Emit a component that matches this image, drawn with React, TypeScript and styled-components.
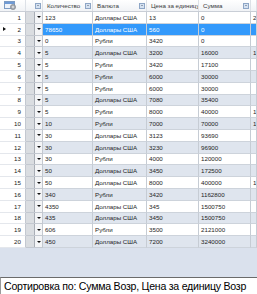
import React from 'react';
import styled, { createGlobalStyle } from 'styled-components';

const GlobalStyle = createGlobalStyle`
  html, body {
    margin: 0;
    padding: 0;
    background: #ffffff;
  }
`;

const COLS = '26px 17px 50px 54px 52px 52px 1fr';

type Row = [string, string, string, string, string];

const rows: Row[] = [
  ['123', 'Доллары США', '13', '0', '2'],
  ['78650', 'Доллары США', '560', '0', ''],
  ['0', 'Рубли', '3420', '0', ''],
  ['5', 'Доллары США', '3200', '16000', '1'],
  ['5', 'Рубли', '3420', '17100', ''],
  ['5', 'Рубли', '6000', '30000', ''],
  ['5', 'Рубли', '6000', '30000', ''],
  ['5', 'Доллары США', '7080', '35400', ''],
  ['5', 'Рубли', '8000', '40000', '1'],
  ['10', 'Рубли', '7000', '70000', '1'],
  ['30', 'Доллары США', '3123', '93690', ''],
  ['30', 'Доллары США', '3230', '96900', ''],
  ['30', 'Рубли', '4000', '120000', ''],
  ['50', 'Доллары США', '3450', '172500', ''],
  ['50', 'Доллары США', '8000', '400000', '1'],
  ['340', 'Рубли', '3420', '1162800', ''],
  ['4350', 'Доллары США', '345', '1500750', ''],
  ['435', 'Доллары США', '3450', '1500750', ''],
  ['606', 'Рубли', '3500', '2121000', ''],
  ['450', 'Доллары США', '7200', '3240000', ''],
];

const Page = styled.div`
  width: 257px;
  height: 294px;
  display: flex;
  flex-direction: column;
  overflow: hidden;
  font-family: 'Liberation Sans', Arial, sans-serif;
  background: #dce3ee;
`;

const Grid = styled.div`
  display: flex;
  flex-direction: column;
  background: #ffffff;
`;

const HeaderRow = styled.div`
  display: grid;
  grid-template-columns: ${COLS};
  height: 12px;
  background: linear-gradient(#ffffff, #f1f3f6);
  border-bottom: 1px solid #c9ced6;
  box-sizing: border-box;
`;

const HeaderCell = styled.div`
  display: flex;
  align-items: center;
  justify-content: space-between;
  padding: 0 1px 0 4px;
  border-right: 1px solid #dde1e7;
  font-size: 6.2px;
  color: #3a3a3a;
  white-space: nowrap;
  overflow: hidden;
  min-width: 0;
`;

const Corner = styled.div`
  display: flex;
  align-items: center;
  padding-left: 4px;
  border-right: 1px solid #dde1e7;
`;

const FilterButton = styled.span`
  flex: none;
  width: 6px;
  height: 6px;
  margin-left: auto;
  box-sizing: border-box;
  border: 1px solid #8ea6c6;
  background: #d6e2f1;
  position: relative;
  &::after {
    content: '';
    position: absolute;
    left: 1px;
    top: 1.5px;
    border-left: 1px solid transparent;
    border-right: 1px solid transparent;
    border-top: 1.5px solid #4a5a70;
  }
`;

const DataRow = styled.div<{ $shaded: boolean }>`
  display: grid;
  grid-template-columns: ${COLS};
  height: 11.8px;
  background: ${(p) => (p.$shaded ? '#dfe5ee' : '#ffffff')};
`;

const RowHeader = styled.div`
  display: flex;
  align-items: center;
  justify-content: space-between;
  padding: 0 4px 0 3px;
  background: #ffffff;
  border-right: 1px solid #c3c8d0;
  border-bottom: 1px solid #e4e7ec;
  box-sizing: border-box;
  font-size: 6.2px;
  color: #222;
`;

const Pointer = styled.span`
  width: 0;
  height: 0;
  border-top: 2px solid transparent;
  border-bottom: 2px solid transparent;
  border-left: 3px solid #111;
`;

const ComboCell = styled.div`
  display: flex;
  border-right: 1px solid #c3c8d0;
  border-bottom: 1px solid #c3c8d0;
  box-sizing: border-box;
  background: #ffffff;
`;

const ComboFace = styled.span`
  width: 8px;
  background: #dadde1;
  border-right: 1px solid #a9aeb6;
`;

const ComboArrow = styled.span`
  flex: 1;
  display: flex;
  align-items: center;
  justify-content: center;
  background: #f4f5f7;
  &::after {
    content: '';
    border-left: 2px solid transparent;
    border-right: 2px solid transparent;
    border-top: 2.5px solid #111;
  }
`;

const Cell = styled.div<{ $selected: boolean }>`
  display: flex;
  align-items: center;
  padding-left: 2px;
  border-right: 1px solid #c6ccd4;
  border-bottom: 1px solid #cdd3db;
  box-sizing: border-box;
  font-size: 6.2px;
  white-space: nowrap;
  overflow: hidden;
  min-width: 0;
  color: ${(p) => (p.$selected ? '#ffffff' : '#1e1e1e')};
  background: ${(p) => (p.$selected ? '#3399fb' : 'transparent')};
`;

const Filler = styled.div`
  flex: 1;
  background: #dae1ed;
`;

const StatusBar = styled.div`
  height: 17px;
  flex: none;
  display: flex;
  align-items: center;
  padding-left: 3px;
  background: #ffffff;
  border-top: 1px solid #6b6b6b;
  border-left: 1px solid #9a9a9a;
  box-sizing: border-box;
  font-size: 10.6px;
  letter-spacing: -0.25px;
  color: #000;
  white-space: nowrap;
`;

const CornerIcon = () => (
  <svg width="13" height="9" viewBox="0 0 13 9">
    <rect x="0.5" y="0.5" width="10" height="7" fill="#eef3fa" stroke="#7d9cc4" />
    <rect x="1" y="1" width="9" height="2" fill="#6f9bd6" />
    <circle cx="9" cy="6" r="2.6" fill="#a8adb4" stroke="#7a7f86" strokeWidth="0.6" />
    <circle cx="9" cy="6" r="0.9" fill="#e6e8eb" />
  </svg>
);

const headers = ['', 'Количество', 'Валюта', 'Цена за единицу', 'Сумма'];

export default function App() {
  return (
    <>
      <GlobalStyle />
      <Page>
        <Grid>
          <HeaderRow>
            <Corner>
              <CornerIcon />
            </Corner>
            {headers.map((h, i) => (
              <HeaderCell key={`h-${i}`}>
                {h && <span>{h}</span>}
                <FilterButton />
              </HeaderCell>
            ))}
            <HeaderCell />
          </HeaderRow>
          {rows.map((r, i) => {
            const selected = i === 1;
            return (
              <DataRow key={`row-${i}`} $shaded={i % 2 === 1}>
                <RowHeader>
                  {selected ? <Pointer /> : <span />}
                  <span>{i + 1}</span>
                </RowHeader>
                <ComboCell>
                  <ComboFace />
                  <ComboArrow />
                </ComboCell>
                {r.map((v, j) => (
                  <Cell key={`c-${i}-${j}`} $selected={selected}>
                    {v}
                  </Cell>
                ))}
              </DataRow>
            );
          })}
        </Grid>
        <Filler />
        <StatusBar>Сортировка по: Сумма Возр, Цена за единицу Возр</StatusBar>
      </Page>
    </>
  );
}
